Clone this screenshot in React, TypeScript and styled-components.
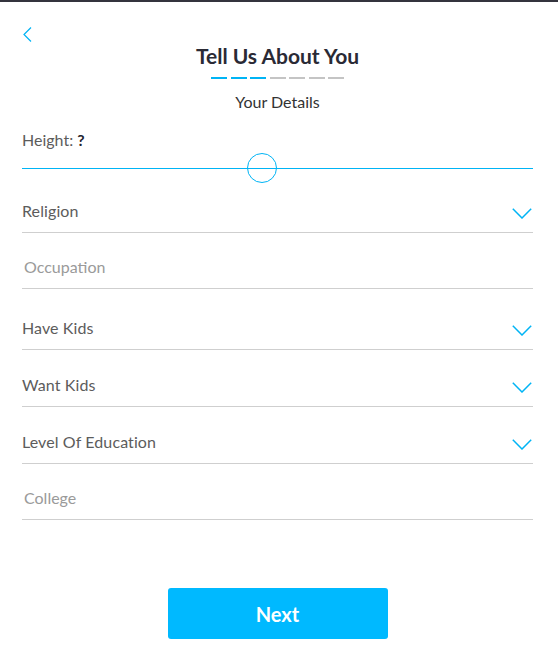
import React, { FC, ReactElement } from 'react';
import { styled, createGlobalStyle } from 'styled-components';

const GlobalStyle = createGlobalStyle`
    html, body {
        margin: 0;
        padding: 0;
        background: #ffffff;
    }
    * {
        box-sizing: border-box;
    }
`

const blue = '#00b4f5';

const Page = styled.div`
    width: 558px;
    height: 660px;
    border-top: 2px solid #34343e;
    padding: 0 25px 0 22px;
    display: flex;
    flex-direction: column;
    font-family: Lato, "Noto Sans", sans-serif;
`

const BackButton = styled.button`
    margin-top: 25px;
    margin-left: 1px;
    width: 10px;
    height: 15px;
    padding: 0;
    border: none;
    background: none;
    display: flex;
    cursor: pointer;
`

const Title = styled.h1`
    margin: 2px 0 0;
    text-align: center;
    font-size: 21px;
    line-height: 24px;
    font-weight: 700;
    color: #2a2a35;
`

const Steps = styled.div`
    margin-top: 9px;
    display: flex;
    justify-content: center;
    gap: 3.5px;
`

const Step = styled.span<{ $done: boolean }>`
    width: 16px;
    height: 2px;
    background: ${p => p.$done ? blue : '#c4c4c4'};
`

const Subtitle = styled.p`
    margin: 13px 0 0;
    text-align: center;
    font-size: 16px;
    line-height: 20px;
    color: #333;
`

const HeightLabel = styled.div`
    margin-top: 18px;
    font-size: 16px;
    line-height: 20px;
    color: #5c5c5c;

    b {
        color: #23232d;
        font-weight: 700;
    }
`

const Slider = styled.div`
    margin-top: 3px;
    height: 30px;
    display: flex;
    align-items: center;
    position: relative;

    &::before {
        content: '';
        flex: 1;
        height: 1px;
        background: ${blue};
    }
`

const Thumb = styled.span`
    position: absolute;
    top: 0;
    width: 30px;
    height: 30px;
    margin-left: -15px;
    border-radius: 50%;
    border: 1.5px solid ${blue};
`

const Form = styled.div`
    display: flex;
    flex-direction: column;
    margin-top: 8px;
`

const Field = styled.div<{ $input?: boolean }>`
    height: 42px;
    margin-top: ${p => p.$input ? '14px' : '15px'};
    margin-bottom: ${p => p.$input ? '4px' : '0'};
    padding-bottom: 2px;
    border-bottom: 1px solid #cfcfcf;
    display: flex;
    align-items: center;
    justify-content: space-between;
    font-size: 16px;

    &:first-child {
        margin-top: 0;
    }
`

const SelectLabel = styled.span`
    color: #5c5c5c;
    letter-spacing: 0.1px;
`

const TextInput = styled.input`
    flex: 1;
    border: none;
    outline: none;
    padding: 0 0 0 2px;
    font-family: inherit;
    font-size: 16px;
    color: #333;
    background: transparent;

    &::placeholder {
        color: #9a9a9a;
    }
`

const Chevron = styled.svg`
    margin-right: 1px;
    margin-top: 6px;
`

const NextButton = styled.button`
    margin: 64px auto 0;
    width: 220px;
    height: 51px;
    border: none;
    border-radius: 3px;
    background: #00b9ff;
    color: #ffffff;
    font-family: inherit;
    font-size: 20px;
    font-weight: 700;
    cursor: pointer;
`

const DownIcon: FC = (): ReactElement => (
    <Chevron width="20" height="11" viewBox="0 0 20 11">
        <polyline points="0.8,0.8 10,10 19.2,0.8" fill="none" stroke={blue} strokeWidth="1.5" />
    </Chevron>
)

const Select: FC<{ label: string }> = ({ label }): ReactElement => (
    <Field>
        <SelectLabel>{label}</SelectLabel>
        <DownIcon />
    </Field>
)

const App: FC = (): ReactElement => {
    const steps = [true, true, true, false, false, false, false];
    const heightPos = 47;

    return (
        <Page>
            <GlobalStyle />
            <BackButton aria-label="Back">
                <svg width="9" height="15" viewBox="0 0 9 15">
                    <polyline points="8,0.5 1,7.5 8,14.5" fill="none" stroke={blue} strokeWidth="1.2" />
                </svg>
            </BackButton>
            <Title>Tell Us About You</Title>
            <Steps>
                {steps.map((done, i) => <Step key={i} $done={done} />)}
            </Steps>
            <Subtitle>Your Details</Subtitle>
            <HeightLabel>Height: <b>?</b></HeightLabel>
            <Slider>
                <Thumb style={{ left: `${heightPos}%` }} />
            </Slider>
            <Form>
                <Select label="Religion" />
                <Field $input>
                    <TextInput placeholder="Occupation" />
                </Field>
                <Select label="Have Kids" />
                <Select label="Want Kids" />
                <Select label="Level Of Education" />
                <Field $input>
                    <TextInput placeholder="College" />
                </Field>
            </Form>
            <NextButton>Next</NextButton>
        </Page>
    );
}

export default App;
